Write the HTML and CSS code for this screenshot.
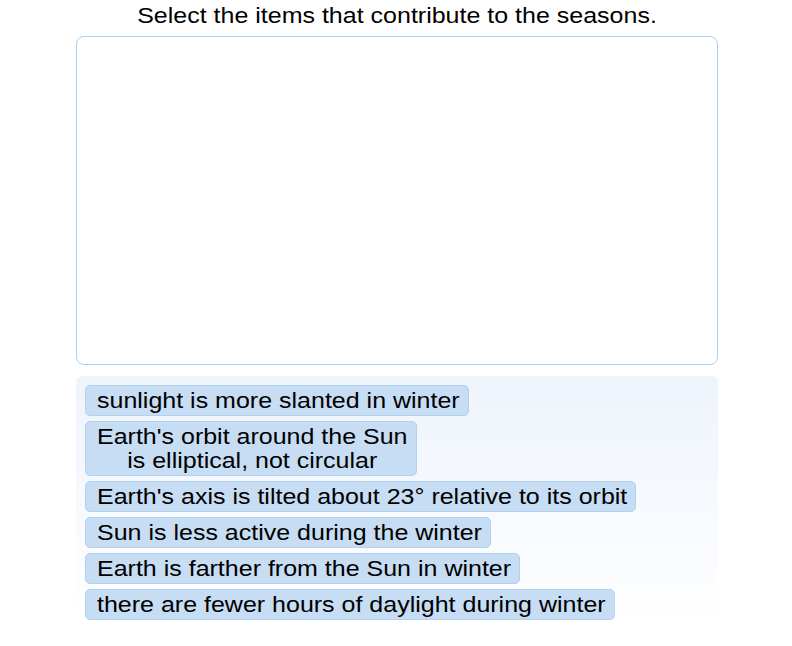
FILE: index.html
```html
<!DOCTYPE html>
<html>
<head>
<meta charset="utf-8">
<link rel="stylesheet" href="styles.css">
</head>
<body>
<div class="page">
  <h1 class="prompt"><span class="line">Select the items that contribute to the seasons.</span></h1>
  <div class="dropzone"></div>
  <div class="source">
    <div class="chip"><span class="line">sunlight is more slanted in winter</span></div>
    <div class="chip"><span class="line">Earth's orbit around the Sun</span><span class="line">is elliptical, not circular</span></div>
    <div class="chip"><span class="line">Earth's axis is tilted about 23° relative to its orbit</span></div>
    <div class="chip"><span class="line">Sun is less active during the winter</span></div>
    <div class="chip"><span class="line">Earth is farther from the Sun in winter</span></div>
    <div class="chip"><span class="line">there are fewer hours of daylight during winter</span></div>
  </div>
</div>
</body>
</html>
```

FILE: styles.css
```css
html, body {
  margin: 0;
  padding: 0;
  background: #ffffff;
}
body {
  font-family: "Liberation Sans", Arial, sans-serif;
  color: #000;
}
.page {
  width: 642px;
  margin-left: 76px;
  padding-top: 3px;
}
.line {
  display: block;
  transform: scaleY(0.88);
}
.prompt {
  margin: 0;
  font-size: 25px;
  font-weight: normal;
  line-height: 24px;
  text-align: center;
  height: 33px;
}
.dropzone {
  box-sizing: border-box;
  height: 329px;
  border: 1.5px solid #acd0f2;
  border-radius: 8px;
  background: #fff;
}
.source {
  box-sizing: border-box;
  margin-top: 11px;
  height: 246px;
  padding: 9px;
  border-radius: 6px;
  background: linear-gradient(to bottom, #eef4fc 0%, #f6f9fe 50%, #ffffff 100%);
  display: flex;
  flex-direction: column;
  align-items: flex-start;
  gap: 5px;
}
.chip {
  font-size: 25px;
  line-height: 24px;
  padding: 2px 8px 3px 11px;
  border: 1px solid #b2d1ee;
  border-radius: 5px;
  background: #c6ddf3;
  text-align: center;
  white-space: nowrap;
}
```
